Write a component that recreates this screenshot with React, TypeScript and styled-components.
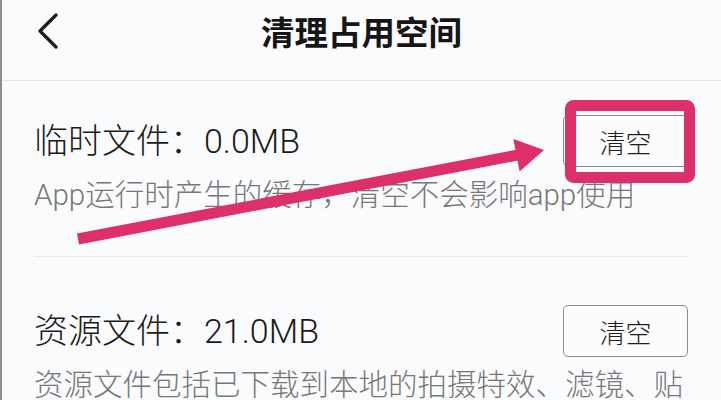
import * as React from 'react';
import styled, { createGlobalStyle } from 'styled-components';

const GlobalStyle = createGlobalStyle`
  html, body {
    margin: 0;
    padding: 0;
    background: #fafbfd;
  }
  body {
    font-family: Roboto, "Noto Sans CJK SC", sans-serif;
  }
`;

const Page = styled.div`
  position: relative;
  height: 400px;
  overflow: hidden;
  border-left: 2px solid #8e8e8e;
  background: #fafbfd;
`;

const Header = styled.header`
  display: grid;
  grid-template-columns: 1fr auto 1fr;
  align-items: center;
  height: 81px;
  padding: 0 35px 19px;
  box-sizing: border-box;
  border-bottom: 1px solid #e6e7ea;
`;

const BackButton = styled.button`
  justify-self: start;
  display: flex;
  padding: 0;
  border: 0;
  background: none;
  color: #1a1a1a;
`;

const Title = styled.h1`
  margin: 0;
  font-family: "Noto Sans CJK SC", sans-serif;
  font-size: 33.5px;
  font-weight: 700;
  line-height: 38px;
  color: #151515;
`;

const List = styled.main`
  padding: 0 33px 0 32px;
`;

const Item = styled.section<{ $first?: boolean }>`
  padding: ${(p) => (p.$first ? '34px 0 41px' : '48px 0 0')};
  border-top: ${(p) => (p.$first ? 'none' : '1px solid #ebecef')};
`;

const ItemHead = styled.div`
  display: flex;
  align-items: center;
  justify-content: space-between;
  height: 52px;
  margin-bottom: 8px;
`;

const ItemName = styled.div`
  font-size: 34px;
  font-weight: 300;
  line-height: 40px;
  color: #1a1a1a;
`;

const ClearButton = styled.button`
  width: 125px;
  height: 52px;
  box-sizing: border-box;
  border: 1.5px solid #8c8c8c;
  border-radius: 5px;
  background: #fcfcfd;
  font-family: "Noto Sans CJK SC", sans-serif;
  font-size: 26px;
  font-weight: 300;
  color: #1e1e1e;
  padding: 0;
`;

const ItemNote = styled.p`
  margin: 0;
  font-size: 29.5px;
  font-weight: 300;
  line-height: 40px;
  color: #777;
  white-space: nowrap;
`;

const Annotation = styled.svg`
  position: absolute;
  left: -2px;
  top: 0;
  pointer-events: none;
`;

const PINK = '#dc2f6b';

const ArrowMark = () => {
  const len = 474.4;
  return (
    <Annotation width="721" height="400" viewBox="0 0 721 400">
      <g transform="translate(78 239) rotate(-10.81)">
        <rect x="0" y="-5.5" width={len - 27} height="11" fill={PINK} />
        <polygon points={`${len - 28},-16.5 ${len},0 ${len - 28},16.5`} fill={PINK} />
      </g>
      <rect x="570.5" y="105.5" width="119" height="72" rx="3" fill="none" stroke={PINK} strokeWidth="11" />
    </Annotation>
  );
};

const items = [
  { name: '临时文件：0.0MB', note: 'App运行时产生的缓存，清空不会影响app使用' },
  { name: '资源文件：21.0MB', note: '资源文件包括已下载到本地的拍摄特效、滤镜、贴' },
];

export default function App() {
  return (
    <Page>
      <GlobalStyle />
      <Header>
        <BackButton aria-label="返回">
          <svg width="22" height="36" viewBox="0 0 22 36">
            <path d="M19 2 L3 18 L19 34" fill="none" stroke="currentColor" strokeWidth="3.2" strokeLinecap="round" strokeLinejoin="round" />
          </svg>
        </BackButton>
        <Title>清理占用空间</Title>
        <span />
      </Header>
      <List>
        {items.map((it, i) => (
          <Item key={it.name} $first={i === 0}>
            <ItemHead>
              <ItemName>{it.name}</ItemName>
              <ClearButton>清空</ClearButton>
            </ItemHead>
            <ItemNote>{it.note}</ItemNote>
          </Item>
        ))}
      </List>
      <ArrowMark />
    </Page>
  );
}
